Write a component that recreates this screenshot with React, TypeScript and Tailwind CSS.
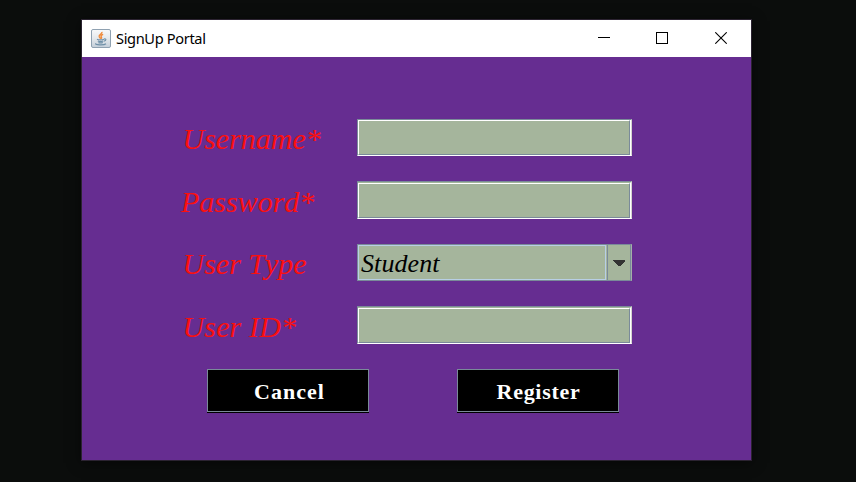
import React from 'react';

const labelClass =
  "w-[175px] whitespace-pre text-[30px] leading-[34px] italic text-[#fa1010] [font-family:'Liberation_Serif',serif] [font-kerning:none]";

function JavaIcon() {
  return (
    <svg width="20" height="20" viewBox="0 0 20 20" className="block shrink-0">
      <defs>
        <linearGradient id="tile" x1="0" y1="0" x2="0" y2="1">
          <stop offset="0" stopColor="#f8f9fa" />
          <stop offset="0.5" stopColor="#e4e8ec" />
          <stop offset="1" stopColor="#c3ced9" />
        </linearGradient>
      </defs>
      <rect x="0.5" y="0.5" width="19" height="18" rx="1.5" fill="url(#tile)" stroke="#8fa1b1" />
      <path d="M11 2.8 C11.5 5 7.4 5.6 8.2 7.6 C8.6 8.5 9.6 9 9.4 9.8 M12.2 5.4 C10.2 6 9.5 6.8 10.4 7.9 C10.9 8.6 10.5 9.3 10 9.8" fill="none" stroke="#f08a3a" strokeWidth="1.4" />
      <path d="M6 10.2 C7.5 11.1 11.5 11 13 10.2 M13 10 C15.6 9.3 15.4 11.8 12.8 12.2 M6.8 12 C8.5 12.7 10.5 12.7 12.2 12 M7.4 13.6 C8.8 14.1 10.5 14.1 11.8 13.5 M4.8 14.3 C3.2 16.1 13 16.5 15 14.7" fill="none" stroke="#7090a8" strokeWidth="1.2" />
    </svg>
  );
}

function TextField({ tall = false }: { tall?: boolean }) {
  return (
    <div
      className={`w-[275px] border-r border-b border-l border-t border-b-white border-r-[#d4d4ce] border-l-[#7a8a99] border-t-[#7a8a99] ${tall ? 'h-[38px]' : 'h-[37px]'}`}
    >
      <div className={`h-full border-r border-white ${tall ? 'border-t border-t-[#a3b59b]' : ''}`}>
        <div className="h-full border-t border-r border-b border-l border-t-white border-r-[#7a8a99] border-b-[#7a8a99] border-l-white bg-[#a5b59c]" />
      </div>
    </div>
  );
}

function ComboBox() {
  return (
    <div className="flex h-[37px] w-[275px] border border-[#7a8a99] border-r-[#a4b0a8] bg-[#a5b59c]">
      <div className="flex h-[35px] w-[248px] items-center border border-[#b8cfe5] pl-[2px] text-[26px] leading-none tracking-[0.1px] italic text-black [font-family:'Liberation_Serif',serif]">
        <span className="pt-[3px]">Student</span>
      </div>
      <div className="ml-px flex flex-1 items-center justify-start border-r border-l border-[#7a8a99] pl-[5px]">
        <svg width="12" height="6" viewBox="0 0 12 6" className="block" shapeRendering="crispEdges">
          <path d="M0 0 H12 V1 L7 6 H5 L0 1 Z" fill="#333333" />
        </svg>
      </div>
    </div>
  );
}

function PushButton({ label, spacing }: { label: string; spacing: string }) {
  return (
    <button className="h-[44px] w-[162px] border-b border-black bg-black">
      <span
        className={`flex h-[43px] items-center justify-center border border-[#7a8a99] pt-[3px] text-[22px] leading-none font-bold text-white [font-family:'Liberation_Serif',serif] ${spacing}`}
      >
        {label}
      </span>
    </button>
  );
}

export default function App() {
  return (
    <div className="h-[482px] w-[856px] overflow-hidden bg-[#0b0d0c] pt-[19px] pl-[81px]">
      <div className="h-[442px] w-[671px] border border-[#2b2331] bg-[#662d91] shadow-[0_2px_12px_rgba(0,0,0,0.5)]">
        <header className="flex h-[37px] items-center bg-white pl-[9px] text-black">
          <JavaIcon />
          <h1 className="mb-[2px] ml-[5px] text-[14.6px] leading-5 [font-family:'Noto_Sans',sans-serif] tracking-[-0.35px]">SignUp Portal</h1>
          <div className="ml-auto flex items-start gap-[46px] pr-[24px]">
            <svg width="12" height="13" viewBox="0 0 12 13" className="block" shapeRendering="crispEdges">
              <rect y="5" width="12" height="1" fill="#000" />
            </svg>
            <svg width="12" height="12" viewBox="0 0 12 12" className="block" shapeRendering="crispEdges">
              <rect x="0.5" y="0.5" width="11" height="11" fill="none" stroke="#000" />
            </svg>
            <svg width="12" height="12" viewBox="0 0 12 12" className="ml-[1px] block">
              <path d="M.3 .3L11.7 11.7M11.7 .3L.3 11.7" stroke="#000" strokeWidth="1.1" />
            </svg>
          </div>
        </header>
        <main className="pt-[62px]">
          <div className="flex h-[62px] pl-[100px]">
            <label className={`${labelClass} pt-[3px] pl-[0.5px]`}>Username*</label>
            <TextField />
          </div>
          <div className="flex h-[63px] pl-[100px]">
            <label className={`${labelClass} -indent-[1px] pt-[4px]`}>Password*</label>
            <TextField tall />
          </div>
          <div className="flex h-[62px] pl-[100px]">
            <label className={`${labelClass} pt-[3px] pl-[0.5px]`}>User Type</label>
            <ComboBox />
          </div>
          <div className="flex h-[63px] pl-[100px]">
            <label className={`${labelClass} pt-[4px] pl-[0.5px] tracking-[0.15px]`}>User ID*</label>
            <TextField tall />
          </div>
          <div className="flex gap-[88px] pl-[125px]">
            <PushButton label="Cancel" spacing="pl-[3px] tracking-[1px]" />
            <PushButton label="Register" spacing="pl-[1px] tracking-[0.7px]" />
          </div>
        </main>
      </div>
    </div>
  );
}
